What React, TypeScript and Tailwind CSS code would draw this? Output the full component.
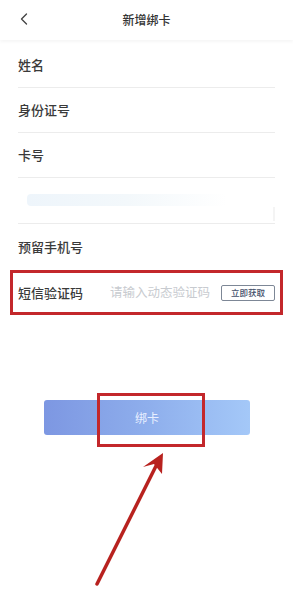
import { ChevronLeft } from "lucide-react";

const font = {
  fontFamily: '"Noto Sans CJK SC", "Noto Sans", sans-serif',
};

function Row({ label }: { label: string }) {
  return (
    <div className="flex h-[45px] items-center border-b border-[#ececec] text-[13px] font-medium text-[#3a3a3a]">
      {label}
    </div>
  );
}

export default function App() {
  return (
    <div className="relative h-[600px] w-[293px] overflow-hidden bg-white" style={font}>
      <div className="relative flex h-[40px] items-center justify-center shadow-[0_2px_3px_rgba(0,0,0,0.04)]">
        <ChevronLeft className="absolute left-[14px] top-[9px] h-[20px] w-[20px] text-[#444]" strokeWidth={1.6} />
        <span className="text-[12px] font-medium text-[#333]">新增绑卡</span>
      </div>

      <div className="px-[18px] pt-[3px]">
        <Row label="姓名" />
        <Row label="身份证号" />
        <Row label="卡号" />
        <div className="flex h-[46px] flex-col border-b border-[#ececec]">
          <div className="ml-[9px] mt-[16px] h-[12px] w-[200px] rounded-sm bg-gradient-to-r from-[#eef5fb] via-[#f3f8fb] to-transparent" />
          <div className="ml-auto mt-[1px] h-[14px] w-[2px] bg-[#f4f4f4]" />
        </div>
        <div className="flex h-[46px] items-center text-[13px] font-medium text-[#3a3a3a]">预留手机号</div>
        <div className="-mx-[8px] flex h-[45px] items-center border-[3px] border-[#c3272b] px-[5px]">
          <span className="text-[13px] font-medium text-[#3a3a3a]">短信验证码</span>
          <span className="ml-[27px] text-[12.5px] text-[#c8cbd0]">请输入动态验证码</span>
          <span className="ml-auto flex h-[16px] items-center rounded-[2px] border border-[#7d8796] px-[9px] text-[8.5px] font-medium text-[#44506a]">
            立即获取
          </span>
        </div>
      </div>

      <div className="mt-[85px] flex justify-center pl-[1px]">
        <div className="flex h-[35px] w-[206px] items-center justify-center rounded-[3px] bg-gradient-to-r from-[#7d97e2] via-[#8eaeec] to-[#a4c8f8] text-[12px] text-[#e8efff]">
          绑卡
        </div>
      </div>

      <div className="absolute left-[97px] top-[393px] h-[54px] w-[108px] border-[3px] border-[#c3272b]" />

      <svg className="absolute left-0 top-0" width="293" height="600" viewBox="0 0 293 600">
        <line x1="97" y1="584" x2="159" y2="460" stroke="#b8221f" strokeWidth="3.5" strokeLinecap="round" />
        <path d="M163 453 L143 467 L154 464 L162 474 Z" fill="#b8221f" />
      </svg>
    </div>
  );
}
